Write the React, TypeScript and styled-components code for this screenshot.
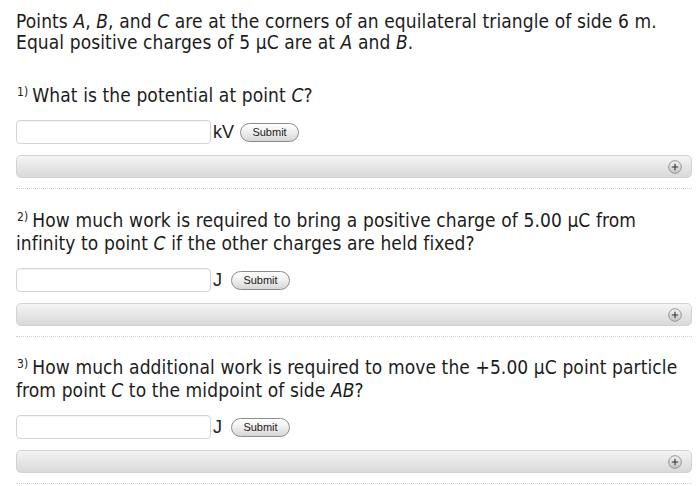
import React from "react";
import styled, { createGlobalStyle } from "styled-components";

const GlobalStyle = createGlobalStyle`
  html, body {
    margin: 0;
    padding: 0;
    background: #ffffff;
  }
  body {
    font-family: "DejaVu Sans Condensed", "DejaVu Sans", sans-serif;
    color: #1c1c1c;
  }
`;

const Page = styled.div`
  width: 700px;
  height: 486px;
  overflow: hidden;
  box-sizing: border-box;
  padding: 11px 8px 0 16px;
`;

const Intro = styled.p`
  margin: 0;
  font-size: 19px;
  line-height: 21px;
  letter-spacing: 0.1px;
`;

const Part = styled.section<{ $gap: number }>`
  margin-top: ${(p) => p.$gap}px;
`;

const Question = styled.p`
  margin: 0;
  font-size: 19px;
  line-height: 23px;
  letter-spacing: 0.1px;
`;

const Num = styled.sup`
  font-size: 12px;
  vertical-align: 6px;
  line-height: 0;
  margin-right: 4px;
  margin-left: 1px;
`;

const AnswerRow = styled.div<{ $top: number }>`
  display: flex;
  align-items: center;
  margin-top: ${(p) => p.$top}px;
  height: 24px;
`;

const Field = styled.input`
  box-sizing: border-box;
  width: 195px;
  height: 24px;
  margin: 0;
  border: 1px solid #d4d4d4;
  border-radius: 4px;
  background: #fff;
  box-shadow: inset 0 1px 1px rgba(0, 0, 0, 0.04);
  outline: none;
`;

const Unit = styled.span`
  font-family: "Liberation Sans", Arial, sans-serif;
  font-size: 18px;
  margin-left: 2px;
  color: #222;
`;

const SubmitButton = styled.button<{ $left: number }>`
  box-sizing: border-box;
  margin-left: ${(p) => p.$left}px;
  width: 59px;
  height: 19px;
  padding: 0;
  border: 1px solid #8c8c8c;
  border-radius: 10px;
  background: linear-gradient(#ffffff, #f0f0f0 45%, #d6d6d6);
  font-family: "Liberation Sans", Arial, sans-serif;
  font-size: 11px;
  color: #222;
  line-height: 17px;
`;

const HintBar = styled.div`
  box-sizing: border-box;
  display: flex;
  justify-content: flex-end;
  align-items: center;
  margin-top: 11px;
  height: 23px;
  padding-right: 9px;
  border: 1px solid #d2d2d2;
  border-radius: 5px;
  background: linear-gradient(#f5f5f5, #e6e6e6 50%, #d9d9d9);
`;

const Divider = styled.hr`
  margin: 10px 0 0;
  border: 0;
  border-top: 1px dotted #d0d0d0;
`;

const Plus = () => (
  <svg width="14" height="14" viewBox="0 0 14 14">
    <defs>
      <linearGradient id="pg" x1="0" y1="0" x2="0" y2="1">
        <stop offset="0" stopColor="#f4f4f4" />
        <stop offset="1" stopColor="#c4c4c4" />
      </linearGradient>
    </defs>
    <circle cx="7" cy="7" r="6.3" fill="url(#pg)" stroke="#8a8a8a" strokeWidth="0.9" />
    <path d="M7 3.8v6.4M3.8 7h6.4" stroke="#333" strokeWidth="1.1" />
  </svg>
);

type PartProps = {
  n: number;
  gap: number;
  rowTop: number;
  unit: string;
  btnLeft: number;
  children: React.ReactNode;
};

const QuestionPart = ({ n, gap, rowTop, unit, btnLeft, children }: PartProps) => (
  <Part $gap={gap}>
    <Question>
      <Num>{n})</Num>
      {children}
    </Question>
    <AnswerRow $top={rowTop}>
      <Field type="text" />
      <Unit>{unit}</Unit>
      <SubmitButton $left={btnLeft}>Submit</SubmitButton>
    </AnswerRow>
    <HintBar>
      <Plus />
    </HintBar>
    <Divider />
  </Part>
);

export default function App() {
  return (
    <>
      <GlobalStyle />
      <Page>
        <Intro>
          Points <i>A</i>, <i>B</i>, and <i>C</i> are at the corners of an equilateral triangle of side 6 m.
          <br />
          Equal positive charges of 5 μC are at <i>A</i> and <i>B</i>.
        </Intro>
        <QuestionPart n={1} gap={31} rowTop={13} unit="kV" btnLeft={6}>
          What is the potential at point <i>C</i>?
        </QuestionPart>
        <QuestionPart n={2} gap={20} rowTop={13} unit="J" btnLeft={9}>
          How much work is required to bring a positive charge of 5.00 μC from
          <br />
          infinity to point <i>C</i> if the other charges are held fixed?
        </QuestionPart>
        <QuestionPart n={3} gap={19} rowTop={13} unit="J" btnLeft={9}>
          How much additional work is required to move the +5.00 μC point particle
          <br />
          from point <i>C</i> to the midpoint of side <i>AB</i>?
        </QuestionPart>
      </Page>
    </>
  );
}
